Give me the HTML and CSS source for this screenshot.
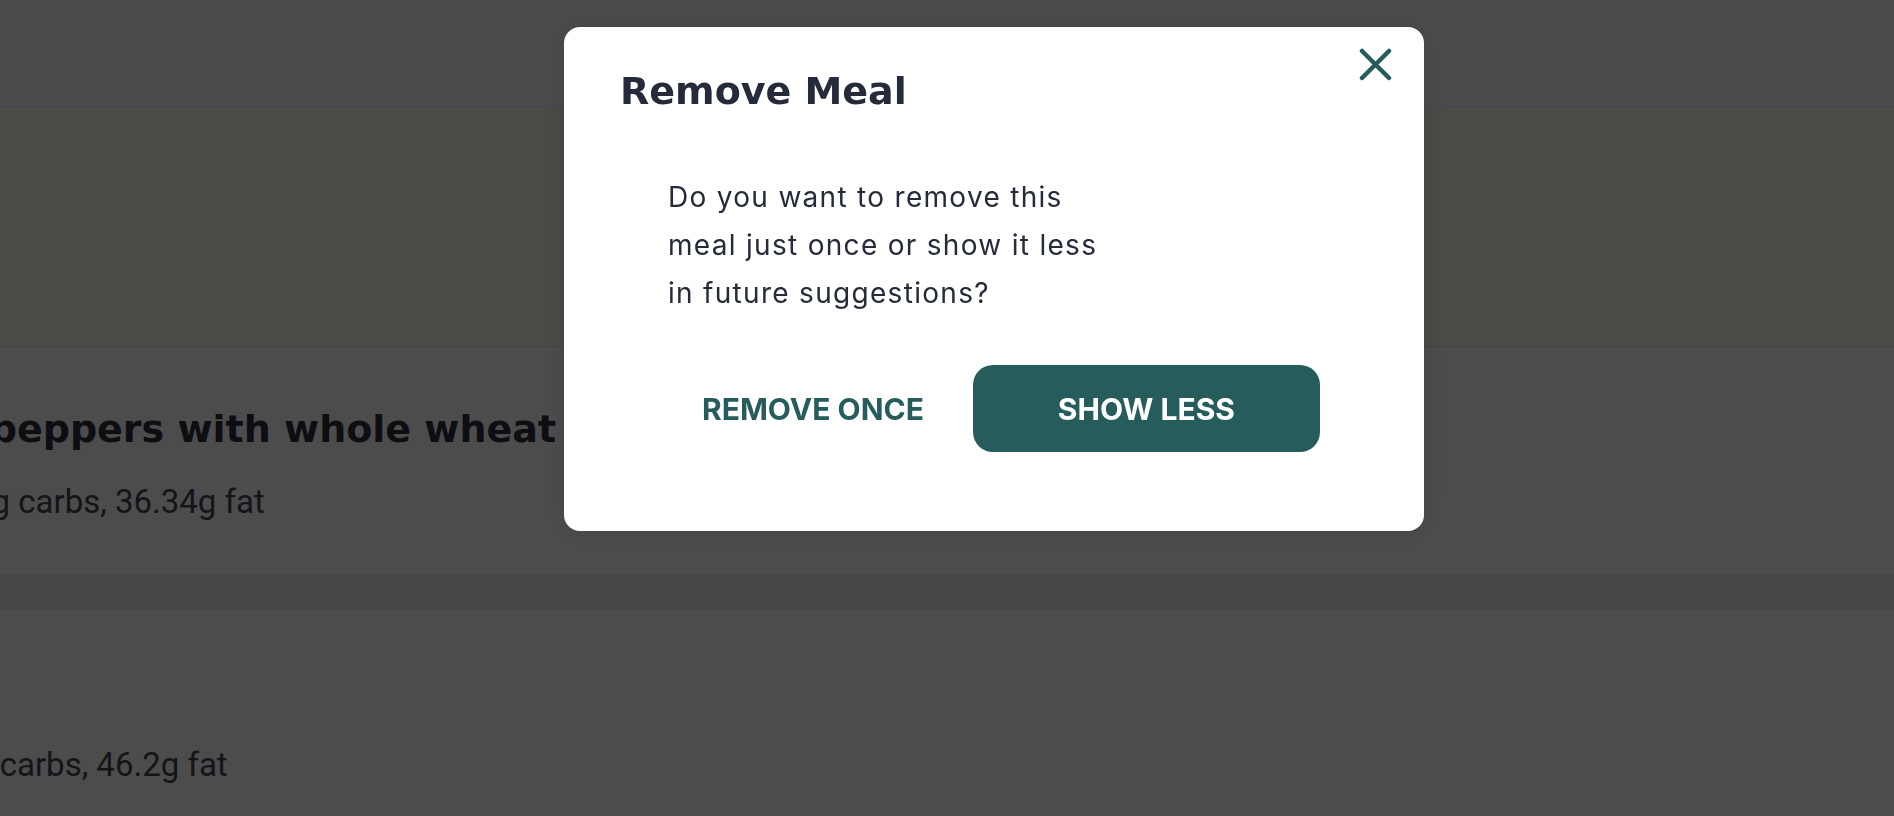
FILE: index.html
```html
<!DOCTYPE html>
<html lang="en">
<head>
  <meta charset="UTF-8">
  <title>Meal Plan</title>
  <link rel="stylesheet" href="styles.css">
</head>
<body>

  <header class="topbar"></header>

  <section class="day-band"></section>

  <div class="meals">
    <div class="meal-card">
      <h3 class="meal-name">Cheese-stuffed bell peppers with whole wheat pasta</h3>
      <p class="meal-macros">518 kcal, 32.4g protein, 41.67g carbs, 36.34g fat</p>
    </div>
    <div class="meal-card">
      <h3 class="meal-name">Lentil soup</h3>
      <p class="meal-macros">604 kcal, 38.1g protein, 52.4g carbs, 46.2g fat</p>
    </div>
  </div>

  <div class="overlay">
    <div class="modal">
      <button class="close-btn" aria-label="Close">
        <svg width="33" height="33" viewBox="0 0 33 33">
          <path d="M3 3 L30 30 M30 3 L3 30" stroke="#265c5b" stroke-width="4.5" stroke-linecap="round" fill="none"/>
        </svg>
      </button>
      <h2 class="modal-title">Remove Meal</h2>
      <p class="modal-text">Do you want to remove this meal just once or show it less in future suggestions?</p>
      <div class="modal-actions">
        <button class="btn-text">REMOVE ONCE</button>
        <button class="btn-primary">SHOW LESS</button>
      </div>
    </div>
  </div>

</body>
</html>
```

FILE: styles.css
```css
body {
  margin: 0;
  height: 816px;
  overflow: hidden;
  font-family: Roboto, sans-serif;
  background: #fff;
}

.topbar {
  height: 106px;
  background: #f7faff;
  border-bottom: 1px solid #e6e9f0;
}

.day-band {
  height: 239px;
  background: #faf7ed;
  border-bottom: 1px solid #e4e6ee;
}

.meals {
  display: flex;
  flex-direction: column;
  gap: 37px;
  margin-left: -438px;
  background: #ede9e6;
}

.meal-card {
  background: #fff;
  padding: 58px 0 51px;
}

.meal-name {
  margin: 0;
  font: 700 38px/48px "DejaVu Sans", sans-serif;
  color: #2c2f3c;
  white-space: nowrap;
}

.meal-macros {
  margin: 29px 0 0;
  font: 400 33px/40px Roboto, sans-serif;
  color: #434653;
  white-space: nowrap;
}

.overlay {
  position: fixed;
  inset: 0;
  display: flex;
  justify-content: center;
  align-items: flex-start;
  padding: 27px 0 0 94px;
  box-sizing: border-box;
  background: rgba(0, 0, 0, 0.7);
}

.modal {
  position: relative;
  width: 860px;
  box-sizing: border-box;
  padding: 42px 56px 79px;
  background: #fff;
  border-radius: 16px;
  box-shadow: 0 0 30px rgba(0, 0, 0, 0.12);
}

.close-btn {
  position: absolute;
  top: 21px;
  right: 32px;
  width: 33px;
  height: 33px;
  padding: 0;
  border: none;
  background: none;
  cursor: pointer;
}

.close-btn svg {
  display: block;
}

.modal-title {
  margin: 0;
  font: 700 38px/44px "DejaVu Sans", sans-serif;
  color: #262b3b;
}

.modal-text {
  max-width: 440px;
  margin: 60px 0 0 48px;
  font: 400 28px/48px Inter, sans-serif;
  letter-spacing: 1.3px;
  color: #262b3b;
}

.modal-actions {
  display: flex;
  gap: 25px;
  margin-top: 48px;
  padding-left: 58px;
}

.btn-text {
  height: 87px;
  padding: 0 24px;
  border: none;
  background: none;
  font: 700 30px Inter, sans-serif;
  color: #265c5b;
  cursor: pointer;
}

.btn-primary {
  width: 347px;
  height: 87px;
  border: none;
  border-radius: 20px;
  background: #265c5b;
  font: 700 30px Inter, sans-serif;
  color: #fff;
  cursor: pointer;
}
```
